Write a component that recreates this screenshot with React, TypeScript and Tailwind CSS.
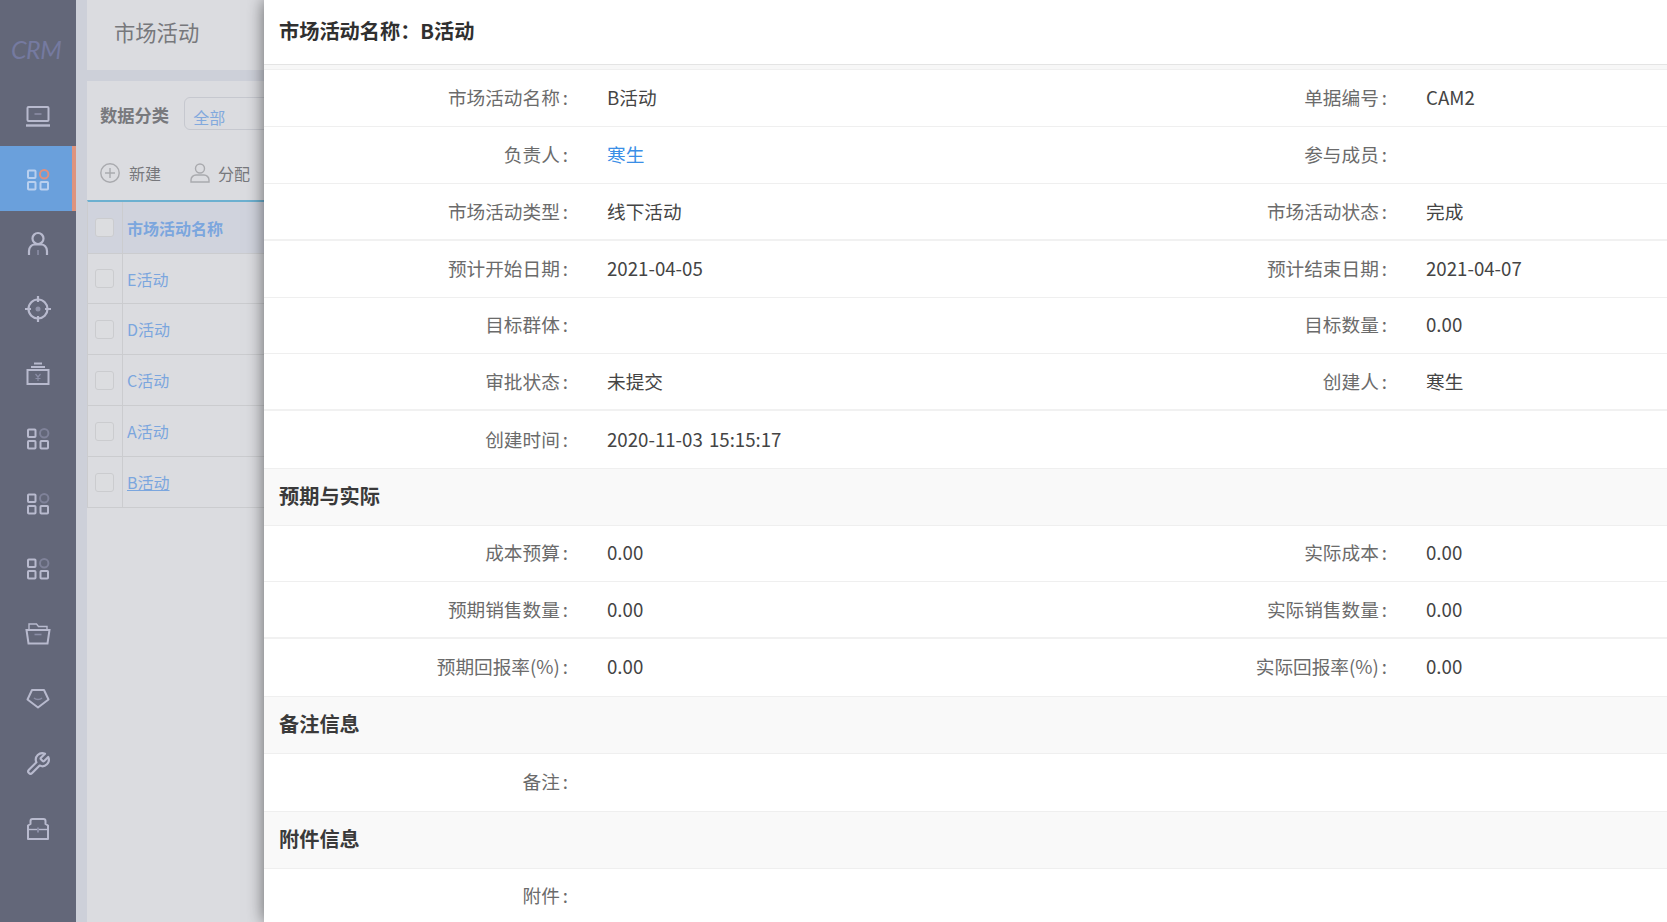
import React from "react";

const font = { fontFamily: '"Noto Sans CJK SC", "Noto Sans", sans-serif' };

const S = "#b8bace";

function GridIcon({ active }: { active?: boolean }) {
  const c = active ? "#b9d0ef" : S;
  return (
    <svg width="24" height="24" viewBox="0 0 24 24" fill="none" strokeWidth="2" className={active ? "mt-[3px]" : ""}>
      <rect x="2" y="2.5" width="7.5" height="7.5" rx="0.8" stroke={c} />
      <rect x="2" y="14" width="7.5" height="7.5" rx="0.8" stroke={c} />
      <rect x="14.5" y="14" width="7.5" height="7.5" rx="0.8" stroke={c} />
      <circle cx="18.2" cy="6.2" r="4.2" stroke={active ? "#e2907c" : "#7f8299"} />
    </svg>
  );
}

const icons: React.ReactNode[] = [
  <svg key="a" width="26" height="24" viewBox="0 0 26 24" fill="none" stroke={S} strokeWidth="2" className="mt-[4px]">
    <rect x="2.5" y="3" width="21" height="14" rx="1" />
    <path d="M1 21.5h24" strokeWidth="2.4" />
    <path d="M9.5 10h7" stroke="#8b8ea6" strokeWidth="1.6" />
  </svg>,
  <GridIcon key="b" active />,
  <svg key="c" width="24" height="26" viewBox="0 0 24 26" fill="none" stroke={S} strokeWidth="2.2">
    <circle cx="12" cy="7.5" r="5.5" />
    <path d="M3 24v-4c0-4 3-6.5 5.5-6.5h7c2.500 0 5.500 2.500 5.500 6.500v4" />
    <path d="M12 19v5" stroke="#8b8ea6" strokeWidth="1.6" />
  </svg>,
  <svg key="d" width="28" height="28" viewBox="0 0 28 28" fill="none" stroke={S} strokeWidth="2.2">
    <circle cx="14" cy="14" r="9.500" />
    <path d="M14 1v6M14 21v6M1 14h6M21 14h6" />
    <circle cx="14" cy="14" r="2.500" fill="#9093a9" stroke="none" />
  </svg>,
  <svg key="e" width="24" height="24" viewBox="0 0 24 24" fill="none" stroke={S} strokeWidth="2">
    <rect x="1.500" y="8" width="21" height="14" />
    <path d="M8 1.500h8M5 5h14" />
    <path d="M9.500 12l2.500 3 2.500-3M12 15v4M9.500 16.500h5" stroke="#8b8ea6" strokeWidth="1.200" />
  </svg>,
  <GridIcon key="f" />,
  <GridIcon key="g" />,
  <GridIcon key="h" />,
  <svg key="i" width="26" height="24" viewBox="0 0 26 24" fill="none" stroke={S} strokeWidth="2">
    <path d="M4 8V2h7.500l2 2.500H22V8" strokeWidth="1.400" />
    <path d="M1.500 8h23l-2 13.500h-19z" />
    <path d="M9.500 12.500h7" stroke="#8b8ea6" strokeWidth="1.600" />
  </svg>,
  <svg key="j" width="24" height="22" viewBox="0 0 24 22" fill="none" stroke={S} strokeWidth="2" strokeLinejoin="round">
    <path d="M6 2h12l4.500 9.500L12 19.500 1.500 11.500z" />
    <path d="M8 10c2 2 6 2 8 0" stroke="#8b8ea6" strokeWidth="1.400" />
  </svg>,
  <svg key="k" width="26" height="26" viewBox="0 0 24 24" fill="none" stroke={S} strokeWidth="2" strokeLinecap="round" strokeLinejoin="round">
    <path d="M14.700 6.300a1 1 0 0 0 0 1.400l1.600 1.600a1 1 0 0 0 1.400 0l3.770-3.770a6 6 0 0 1-7.940 7.940l-6.910 6.910a2.120 2.120 0 0 1-3-3l6.910-6.910a6 6 0 0 1 7.940-7.940l-3.760 3.760z" />
  </svg>,
  <svg key="l" width="24" height="24" viewBox="0 0 24 24" fill="none" stroke={S} strokeWidth="2" strokeLinejoin="round">
    <path d="M2 22V8.500L4.500 7V4Q4.500 2 6.500 2h11q2 0 2 2V7L22 8.500V22z" />
    <path d="M2 12.500h20" strokeWidth="1.400" />
    <path d="M12 10.500v5" stroke="#8b8ea6" strokeWidth="2" />
  </svg>,
];

function Sidebar() {
  return (
    <aside className="w-[76px] shrink-0 bg-[#636779] flex flex-col">
      <div className="h-[81px] pl-[11px] pt-[34px]">
        <span className="text-[25px] italic leading-[30px] tracking-[-0.5px] text-[#757aa0]" style={{ fontFamily: "Lato, sans-serif" }}>
          CRM
        </span>
      </div>
      {icons.map((ic, i) => (
        <div
          key={i}
          className={
            i === 1
              ? "h-[65px] flex items-center justify-center bg-[#6aa0dc] border-r-4 border-[#df947e] pl-[4px]"
              : "h-[65px] flex items-center justify-center"
          }
        >
          {ic}
        </div>
      ))}
    </aside>
  );
}

function Check() {
  return <span className="block w-[19px] h-[19px] rounded-[3px] border border-[#cbcccf] bg-[#dcdde0] -ml-[1px]" />;
}

const list = ["E活动", "D活动", "C活动", "A活动", "B活动"];

function Background() {
  return (
    <main className="flex-1 min-w-0 bg-[#cdd0d9] pl-[11px] flex flex-col">
      <div className="h-[70px] shrink-0 bg-[#dbdce0] pl-[27px] flex items-center">
        <span className="text-[21.300px] text-[#77787c] leading-none pb-[6px]">市场活动</span>
      </div>
      <div className="mt-[11px] flex-1 bg-[#dbdce0]">
        <div className="h-[49px] pl-[13px] pt-[17px] flex items-start gap-[15px]">
          <b className="text-[17.300px] leading-[33px] text-[#78797d] font-bold whitespace-nowrap">数据分类</b>
          <div className="w-[200px] h-[33px] -mt-[1px] shrink-0 rounded-[6px] border border-[#c6c8cf] pl-[8px] text-[16px] leading-[38px] text-[#82a9dd]">全部</div>
        </div>
        <div className="h-[70px] pl-[13px] pt-[25px] flex items-start text-[16px] text-[#77787c] leading-[36px]">
          <div className="flex items-center gap-[9px] h-[36px] w-[90px]">
            <svg width="20" height="20" viewBox="0 0 20 20" fill="none" stroke="#a9aaae" strokeWidth="1.400">
              <circle cx="10" cy="10" r="9.200" />
              <path d="M10 5v10M5 10h10" />
            </svg>
            <span>新建</span>
          </div>
          <div className="flex items-center gap-[8px] h-[36px]">
            <svg width="20" height="20" viewBox="0 0 20 20" fill="none" stroke="#a9aaae" strokeWidth="1.400">
              <circle cx="10" cy="5.500" r="4.500" />
              <path d="M1 19v-2c0-3 2.500-5 5-5h8c2.500 0 5 2 5 5v2z" />
            </svg>
            <span>分配</span>
          </div>
        </div>
        <div className="border-t-2 border-[#6cb0d0] border-l border-l-[#cbcccf]">
          <div className="h-[52px] bg-[#d0d3dd] flex items-center border-b border-[#cbcccf]">
            <div className="w-[35px] h-full flex items-center justify-center border-r border-[#cbcccf]"><Check /></div>
            <b className="pl-[4px] text-[16px] font-bold text-[#7ba6de] whitespace-nowrap">市场活动名称</b>
          </div>
          {list.map((t, i) => (
            <div key={t} className={i === 0 ? "h-[50px] flex items-center border-b border-[#cbcccf]" : "h-[51px] flex items-center border-b border-[#cbcccf]"}>
              <div className="w-[35px] h-full flex items-center justify-center border-r border-[#cbcccf]"><Check /></div>
              <span className={i === 4 ? "pl-[4px] text-[16px] text-[#7ba6de] underline" : "pl-[4px] text-[16px] text-[#7ba6de]"}>{t}</span>
            </div>
          ))}
        </div>
      </div>
    </main>
  );
}

type Cell = [string, string?, boolean?];
type Row = { h: number; thick?: boolean; low?: boolean; cells: Cell[] };

function FieldRow({ h, thick, low, cells }: Row) {
  return (
    <div
      className={thick ? "grid grid-cols-[819px_1fr] border-b-2 border-[#f1f1f1]" : "grid grid-cols-[819px_1fr] border-b border-[#efefef]"}
      style={{ height: h }}
    >
      {cells.map(([label, value, link]) => (
        <div key={label} className={low ? "flex items-center pb-[3px]" : "flex items-center pb-[2px]"}>
          <span className="w-[304px] shrink-0 text-right text-[#6b6b6b] whitespace-nowrap">
            {label}<span className="pl-[3px]">:</span>
          </span>
          <span className={link ? "pl-[39px] text-[#3a8ee6] whitespace-nowrap" : "pl-[39px] text-[#444444] whitespace-nowrap [word-spacing:2px]"}>{value}</span>
        </div>
      ))}
    </div>
  );
}

function Section({ title, h }: { title: string; h: number }) {
  return (
    <div className="bg-[#f9f9f9] border-b border-[#efefef] pl-[15px] pb-[2px] flex items-center" style={{ height: h }}>
      <b className="text-[20.200px] font-bold text-[#3a3a3a]">{title}</b>
    </div>
  );
}

const basic: Row[] = [
  { h: 57, cells: [["市场活动名称", "B活动"], ["单据编号", "CAM2"]] },
  { h: 57, cells: [["负责人", "寒生", true], ["参与成员", ""]] },
  { h: 57, thick: true, cells: [["市场活动类型", "线下活动"], ["市场活动状态", "完成"]] },
  { h: 57, low: true, cells: [["预计开始日期", "2021-04-05"], ["预计结束日期", "2021-04-07"]] },
  { h: 56, low: true, cells: [["目标群体", ""], ["目标数量", "0.00"]] },
  { h: 57, thick: true, cells: [["审批状态", "未提交"], ["创建人", "寒生"]] },
  { h: 58, cells: [["创建时间", "2020-11-03 15:15:17"]] },
];

const expect_: Row[] = [
  { h: 56, low: true, cells: [["成本预算", "0.00"], ["实际成本", "0.00"]] },
  { h: 57, thick: true, cells: [["预期销售数量", "0.00"], ["实际销售数量", "0.00"]] },
  { h: 58, low: true, cells: [["预期回报率(%)", "0.00"], ["实际回报率(%)", "0.00"]] },
];

function Drawer() {
  return (
    <section className="absolute top-0 bottom-0 left-[264px] right-0 bg-white shadow-[0_0_16px_rgba(0,0,0,0.55)] text-[18.670px] overflow-hidden">
      <div className="h-[65px] border-b border-[#e4e4e4] pl-[15px] pb-[2px] flex items-center">
        <b className="text-[20.200px] font-bold text-[#303030] whitespace-nowrap">市场活动名称：B活动</b>
      </div>
      <div className="h-[5px] bg-[#f7f7f7] border-b border-[#efefef]" />
      {basic.map((r) => <FieldRow key={r.cells[0][0]} {...r} />)}
      <Section title="预期与实际" h={57} />
      {expect_.map((r) => <FieldRow key={r.cells[0][0]} {...r} />)}
      <Section title="备注信息" h={57} />
      <FieldRow h={58} low cells={[["备注", ""]]} />
      <Section title="附件信息" h={57} />
      <FieldRow h={56} low cells={[["附件", ""]]} />
    </section>
  );
}

export default function App() {
  return (
    <div className="relative flex w-[1667px] h-[922px] overflow-hidden" style={font}>
      <Sidebar />
      <Background />
      <Drawer />
    </div>
  );
}
